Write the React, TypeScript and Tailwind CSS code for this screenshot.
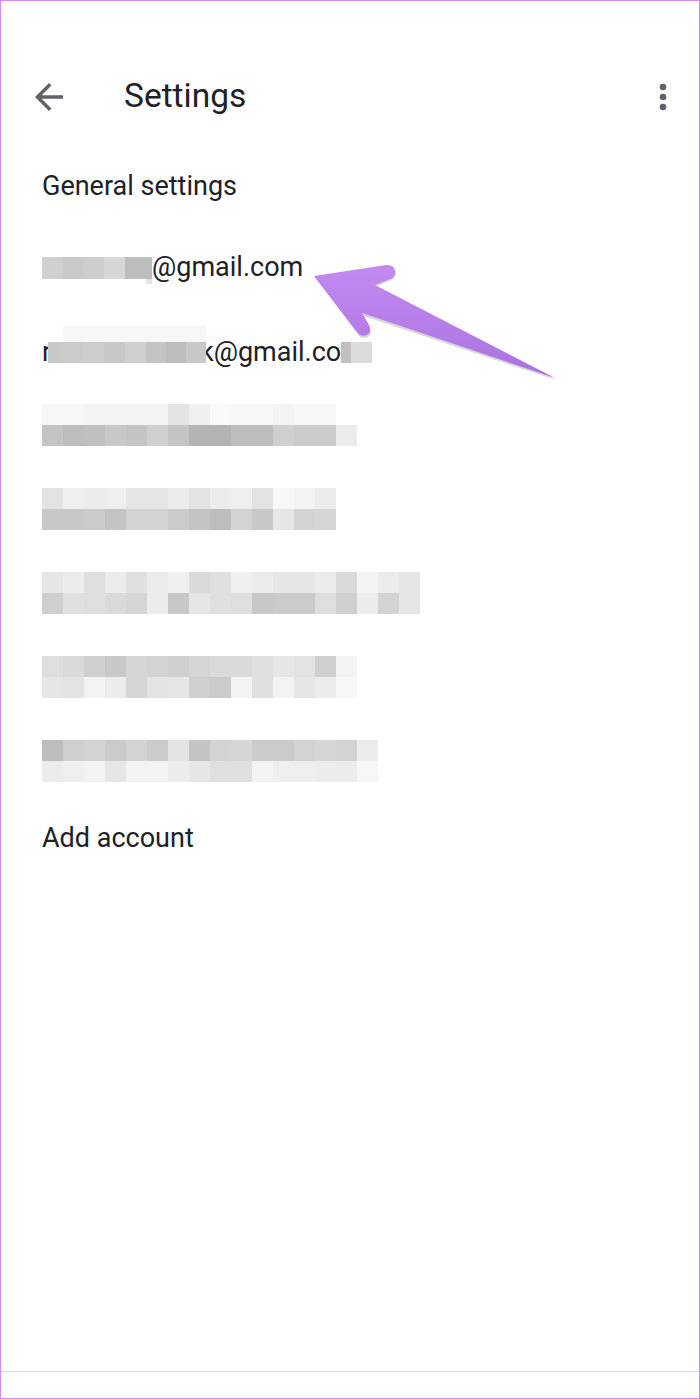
import React from "react";

const P: Record<string, string> = {
  a: "bg-[#f7f7f7]",
  b: "bg-[#f3f3f3]",
  c: "bg-[#efefef]",
  d: "bg-[#ececec]",
  e: "bg-[#e6e6e6]",
  f: "bg-[#e3e3e3]",
  g: "bg-[#e0e0e0]",
  h: "bg-[#dedede]",
  i: "bg-[#dadada]",
  j: "bg-[#d6d6d6]",
  k: "bg-[#d3d3d3]",
  l: "bg-[#cfcfcf]",
  m: "bg-[#cbcbcb]",
  n: "bg-[#c8c8c8]",
  o: "bg-[#c4c4c4]",
  p: "bg-[#c0c0c0]",
  q: "bg-[#bdbdbd]",
  r: "bg-[#b4b4b4]",
  s: "bg-[#fafafa]",
};

const blocks: [string, string][] = [
  ["aabbbbfcsaabaa", "oqpnolorrqqlmmd"],
  ["fcdceedfdcfabd", "nnmokkmoqknekj"],
  ["edhdgdcigcdeedibde", "lghijdneghnmmhldke"],
  ["hilnjkljiigeflb", "efbdjfelmbgbeda"],
  ["qlkmkmfokjmmkjkd", "dcbebbdeggbccdda"],
];

function MosaicLine({ s }: { s: string }) {
  return (
    <div className="flex">
      {s.split("").map((ch, i) => (
        <div key={i} className={`w-[21px] h-[21px] ${P[ch]}`} />
      ))}
    </div>
  );
}

const font = { fontFamily: "Roboto, 'Noto Sans', Arial, sans-serif" };

export default function App() {
  return (
    <div
      className="relative w-[700px] h-[1399px] bg-white border border-[#d28cf4] flex flex-col text-[#202124] overflow-hidden"
      style={font}
    >
      {/* Header */}
      <div className="h-[143px] flex flex-col">
        <div className="mt-[68px] h-[56px] flex items-center">
          <div className="ml-[27px] w-[42px] h-[42px] flex items-center justify-center">
            <svg viewBox="0 0 24 24" width="42" height="42" fill="#5f6368">
              <path d="M20 11H7.83l5.59-5.59L12 4l-8 8 8 8 1.41-1.41L7.83 13H20v-2z" />
            </svg>
          </div>
          <div className="ml-[54px] text-[33.5px] leading-none pb-[2px]">Settings</div>
          <div className="flex-1" />
          <div className="mr-[16px] w-[40px] h-[40px] flex items-center justify-center">
            <svg viewBox="0 0 24 24" width="40" height="40" fill="#5f6368">
              <circle cx="12" cy="6" r="2" />
              <circle cx="12" cy="12" r="2" />
              <circle cx="12" cy="18" r="2" />
            </svg>
          </div>
        </div>
      </div>

      {/* General settings */}
      <div className="h-[84px] flex items-center pl-[41px] text-[27px]">
        General settings
      </div>

      {/* Email 1 */}
      <div className="h-[84px] flex items-center pl-[41px] pb-[5px] text-[27px]">
        <div className="relative flex h-[22px]">
          <div className="w-[21px] h-[22px] bg-[#d0d0d0]" />
          <div className="w-[20px] h-[22px] bg-[#cacaca]" />
          <div className="w-[21px] h-[22px] bg-[#cdcdcd]" />
          <div className="w-[21px] h-[22px] bg-[#d6d6d6]" />
          <div className="w-[27px] h-[22px] bg-[#bdbdbd]" />
          <div className="absolute left-[104px] top-[22px] w-[6px] h-[5px] bg-[#e6e6e6]" />
        </div>
        <span className="leading-none">@gmail.com</span>
      </div>

      {/* Email 2 */}
      <div className="h-[84px] flex items-center pl-[41px] pb-[4px] text-[27px]">
        <span className="w-[6px] overflow-hidden leading-none">r</span>
        <div className="relative z-10 flex h-[21px]">
          <div className="absolute left-[15px] top-[-16px] w-[143px] h-[16px] bg-[#f7f7f7]" />
          <div className="w-[14px] h-[21px] bg-[#c8c8c8]" />
          <div className="w-[21px] h-[21px] bg-[#cbcbcb]" />
          <div className="w-[21px] h-[21px] bg-[#cdcdcd]" />
          <div className="w-[21px] h-[21px] bg-[#c8c8c8]" />
          <div className="w-[21px] h-[21px] bg-[#cfcfcf]" />
          <div className="w-[20px] h-[21px] bg-[#c4c4c4]" />
          <div className="w-[20px] h-[21px] bg-[#bdbdbd]" />
          <div className="w-[20px] h-[21px] bg-[#c8c8c8]" />
        </div>
        <span className="leading-none ml-[-6px]">k@gmail.co</span>
        <div className="flex h-[21px]">
          <div className="w-[10px] h-[21px] bg-[#c0c0c0]" />
          <div className="w-[21px] h-[21px] bg-[#dcdcdc]" />
        </div>
      </div>

      {/* Mosaic accounts */}
      {blocks.map(([top, bottom], i) => (
        <div key={i} className="h-[84px] pt-[8px] pl-[41px]">
          <MosaicLine s={top} />
          <MosaicLine s={bottom} />
        </div>
      ))}

      {/* Add account */}
      <div className="h-[44px] flex items-center pl-[41px] text-[27px]">Add account</div>

      <div className="flex-1" />
      <div className="h-px bg-[#dcdcdc]" />
      <div className="h-[26px]" />

      {/* Annotation arrow */}
      <svg
        className="absolute left-[-1px] top-[-1px] pointer-events-none"
        width="700"
        height="1399"
        viewBox="0 0 700 1399"
      >
        <defs>
          <linearGradient id="ag" x1="0" y1="0" x2="0" y2="1">
            <stop offset="0" stopColor="#c48af3" />
            <stop offset="1" stopColor="#ab72df" />
          </linearGradient>
        </defs>
        <path
          d="M556,379 L362,314.5 L369,326 Q372,333 367,336 Q361,338.5 357,333 L314,276 L386,265 Q394,264 395,271 Q396,278 388,280 L375,285 Z"
          fill="#8a8a8a"
          opacity="0.35"
          transform="translate(0.8,1.2)"
        />
        <path
          d="M555,378 L362,313 L369,325 Q372,332 367,335 Q361,337.5 357,332 L314,276 L386,265 Q394,264 395,271 Q396,278 388,280 L375,285 Z"
          fill="url(#ag)"
        />
      </svg>
    </div>
  );
}
